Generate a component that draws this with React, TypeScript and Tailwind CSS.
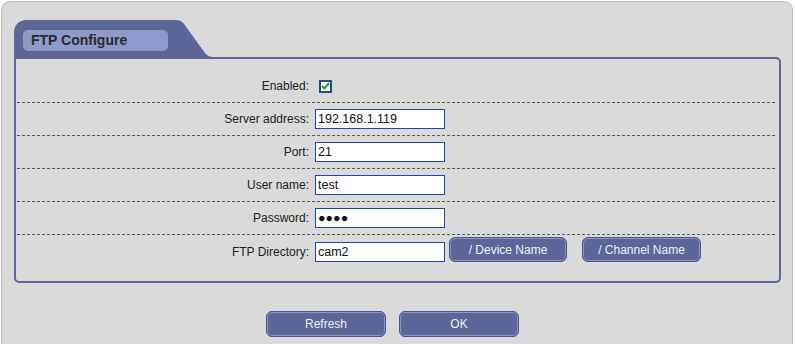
import React from "react";

const font = "font-['Liberation_Sans',Arial,sans-serif]";

function Separator() {
   return (
      <div className="ml-px mr-[2px] h-px bg-[linear-gradient(to_right,#5a5a5a_3px,transparent_3px)] bg-[length:5px_1px]" />
   );
}

function Label({ children }: { children: React.ReactNode }) {
   return (
      <div className="w-[294px] shrink-0 pr-[1px] text-right text-[12px] leading-[20px] text-[#222]">
         {children}
      </div>
   );
}

function TextBox({ value }: { value: string }) {
   return (
      <div className="ml-[5px] flex h-[20px] w-[130px] items-center border border-[#2343a8] bg-white pl-[2px] text-[12.5px] text-[#111]">
         {value}
      </div>
   );
}

function BlueButton({
   children,
   className = "",
}: {
   children: React.ReactNode;
   className?: string;
}) {
   return (
      <button
         className={`flex items-center justify-center rounded-[6px] border border-[#4a5385] bg-[#5c6698] text-[12px] text-[#eef0f8] shadow-[inset_0_0_0_1px_#8e97c9] ${className}`}
      >
         {children}
      </button>
   );
}

export default function App() {
   return (
      <div className={`h-[344px] w-[795px] overflow-hidden bg-white ${font}`}>
         <div className="ml-px mt-px h-[360px] w-[792px] rounded-t-[9px] border border-[#b9b9b9] bg-[#dadada] pl-[12px] pt-[18px]">
            {/* Tab */}
            <div className="flex h-[37px] items-stretch">
               <div className="w-[161px] rounded-tl-[12px] bg-[#5c6698] pl-[9px] pt-[10px]">
                  <div className="flex h-[21px] w-[145px] items-center rounded-[5px] bg-[#8f99cc] pl-[8px] text-[14px] font-bold text-[#2a2a2a]">
                     FTP Configure
                  </div>
               </div>
               <svg width="38" height="37" viewBox="0 0 38 37" className="block">
                  <path
                     d="M0 0 H1 Q6 0 9 4 L30 33 Q33 37 38 37 H0 Z"
                     fill="#5c6698"
                  />
               </svg>
            </div>

            {/* Panel */}
            <div className="w-[767px] rounded-tr-[5px] rounded-b-[5px] border-2 border-[#5c6698] pb-[14px] pt-[11px] text-[#222]">
               <div className="flex h-[32px] items-center">
                  <Label>Enabled:</Label>
                  <div className="ml-[9px] flex h-[13px] w-[13px] items-center justify-center border-2 border-[#1f4f82] bg-white">
                     <svg width="9" height="8" viewBox="0 0 9 8">
                        <path
                           d="M1 4 L3.5 6.5 L8 1"
                           fill="none"
                           stroke="#1ea21e"
                           strokeWidth="2"
                        />
                     </svg>
                  </div>
               </div>
               <Separator />
               <div className="flex h-[32px] items-center">
                  <Label>Server address:</Label>
                  <TextBox value="192.168.1.119" />
               </div>
               <Separator />
               <div className="flex h-[32px] items-center">
                  <Label>Port:</Label>
                  <TextBox value="21" />
               </div>
               <Separator />
               <div className="flex h-[32px] items-center">
                  <Label>User name:</Label>
                  <TextBox value="test" />
               </div>
               <Separator />
               <div className="flex h-[32px] items-center">
                  <Label>Password:</Label>
                  <TextBox value="●●●●" />
               </div>
               <Separator />
               <div className="flex h-[32px] items-end pb-[5px]">
                  <Label>FTP Directory:</Label>
                  <TextBox value="cam2" />
                  <BlueButton className="ml-[4px] h-[25px] w-[118px]">
                     / Device Name
                  </BlueButton>
                  <BlueButton className="ml-[15px] h-[25px] w-[119px]">
                     / Channel Name
                  </BlueButton>
               </div>
            </div>

            {/* Footer buttons */}
            <div className="flex gap-[13px] pl-[252px] pt-[28px]">
               <BlueButton className="h-[26px] w-[120px]">Refresh</BlueButton>
               <BlueButton className="h-[26px] w-[120px]">OK</BlueButton>
            </div>
         </div>
      </div>
   );
}
